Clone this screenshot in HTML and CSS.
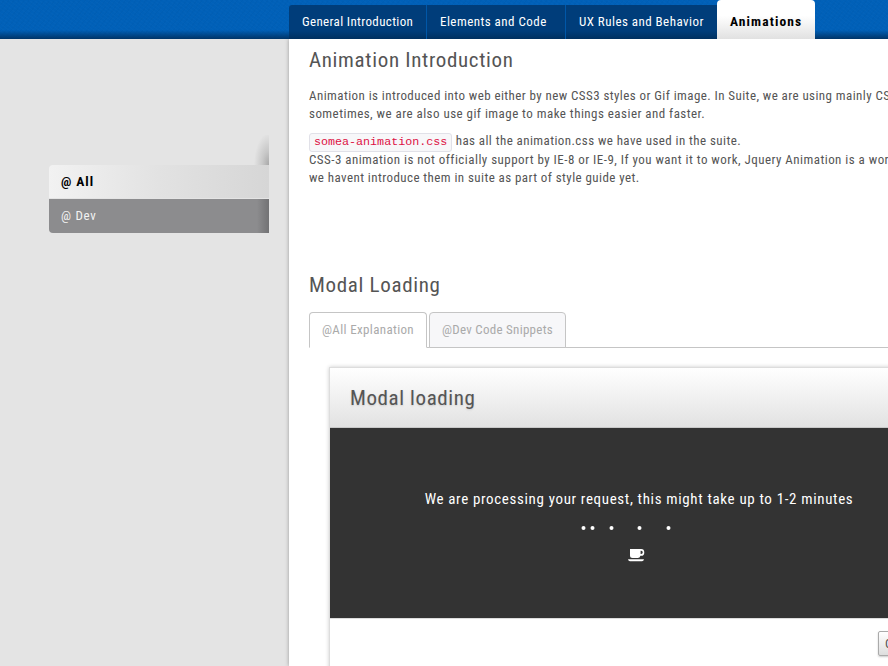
FILE: index.html
```html
<!DOCTYPE html>
<html lang="en">
<head>
<meta charset="utf-8">
<title>Style Guide - Animations</title>
<link rel="stylesheet" href="styles.css">
</head>
<body>
<header class="topbar">
  <nav class="mainnav">
    <a class="nav-item nav-first">General Introduction</a>
    <a class="nav-item nav-second">Elements and Code</a>
    <a class="nav-item nav-third">UX Rules and Behavior</a>
    <a class="nav-item nav-active">Animations</a>
  </nav>
</header>
<div class="layout">
  <aside class="sidebar">
    <div class="side-shade"></div>
    <ul class="side-list">
      <li class="side-item side-current">@ All</li>
      <li class="side-item side-dev">@ Dev</li>
    </ul>
  </aside>
  <main class="content">
    <h2 class="title">Animation Introduction</h2>
    <p class="intro"><span class="lead">Animation is introduced into web either by new CSS3 styles or Gif image. In Suite, we are using mainly CSS3,</span><br>sometimes, we are also use gif image to make things easier and faster.</p>
    <p class="details"><code>somea-animation.css</code> <span class="suite">has all the animation.css we have used in the suite.</span><br>CSS-3 animation is not officially support by IE-8 or IE-9, If you want it to work, Jquery Animation is a workaround, but<br><span class="closing">we havent introduce them in suite as part of style guide yet.</span></p>
    <h2 class="title section">Modal Loading</h2>
    <div class="tabs">
      <a class="tab tab-on">@All Explanation</a>
      <a class="tab">@Dev Code Snippets</a>
    </div>
    <section class="modal">
      <div class="modal-head"><h3>Modal loading</h3></div>
      <div class="modal-body">
        <p class="message">We are processing your request, this might take up to 1-2 minutes</p>
        <svg class="dots" viewBox="0 0 92 6" fill="#fff"><circle cx="3.500" cy="3" r="2"/><circle cx="12.500" cy="3" r="2"/><circle cx="31.500" cy="3" r="2"/><circle cx="59.500" cy="3" r="2"/><circle cx="88.500" cy="3" r="2"/></svg>
        <svg class="cup" viewBox="0 0 17 13"><path fill="#fff" fill-rule="evenodd" d="M2 0h11.200a3 3.300 0 0 1 0 6.800h-.8q-.5 2.200-2.600 2.200H4.500q-2.500 0-2.500-2.500zM12.600 1.700v3.300h.6a1.500 1.600 0 0 0 0-3.300zM0 10.300h16q-.4 2-2 2H2q-1.600 0-2-2z"/></svg>
      </div>
      <div class="modal-foot"><button class="btn">Cancel</button></div>
    </section>
  </main>
</div>
</body>
</html>
```
FILE: styles.css
```css
* { box-sizing: border-box; }
body { margin: 0; height: 666px; overflow: hidden; background: #e4e4e4; color: #555; font: 13px/18px "Roboto Condensed", Roboto, sans-serif; letter-spacing: .46px; }
.topbar { height: 39px; padding-left: 289px; background: linear-gradient(transparent 30px, #003467 39px), repeating-linear-gradient(37deg, #ffffff03 0 1px, transparent 1px 3px), repeating-linear-gradient(-52deg, #00000005 0 1px, transparent 1px 4px), #0060b8; }
.mainnav { display: flex; align-items: flex-end; height: 39px; }
.nav-item { height: 34px; line-height: 33px; padding-left: 13px; color: #fff; background: linear-gradient(#003d7a 26px, #00305f); white-space: nowrap; }
.nav-first { width: 138px; border-right: 1px solid #0057a8; border-radius: 3px 0 0; letter-spacing: .35px; }
.nav-second { width: 139px; border-right: 1px solid #0057a8; }
.nav-third { width: 151px; }
.nav-active { width: 98px; height: 39px; line-height: 43px; border-radius: 4px 4px 0 0; background: linear-gradient(#fff 40%, #e1e1e1); color: #000; font-size: 13.5px; font-weight: 700; letter-spacing: 1.1px; }
.layout { display: flex; height: 627px; }
.sidebar { width: 289px; padding: 96px 20px 0 49px; flex: none; }
.side-shade { height: 30px; background: radial-gradient(ellipse 15px 32px at 100% 100%, #a8a8a8, #c8c8c8 45%, #e4e4e4); }
.side-list { list-style: none; margin: 0; padding: 0; }
.side-item { height: 34px; padding-left: 12px; line-height: 33px; letter-spacing: .7px; }
.side-current { background: linear-gradient(90deg, #f2f2f2, #e2e2e2 50%, #d6d6d6); border-bottom: 1px solid #e4e4e4; color: #000; font-weight: 700; font-size: 13.5px; letter-spacing: .95px; border-radius: 4px 0 0; }
.side-dev { background: linear-gradient(90deg, transparent 208px, #727274), #8c8c8e; color: #f2f2f2; border-radius: 0 0 0 4px; }
.content { width: 720px; flex: none; padding: 8px 0 0 20px; background: #fff; box-shadow: 0 0 4px #999; clip-path: inset(0 0 0 -8px); white-space: nowrap; }
.title { margin: 0; font-weight: 400; font-size: 21px; line-height: 26px; letter-spacing: .67px; }
.intro { margin: 14px 0 9px; }
.details { margin: 0; }
.lead { letter-spacing: .42px; }
.suite { letter-spacing: .42px; }
.closing { letter-spacing: .42px; }
code { display: inline-block; height: 19px; margin-bottom: -1px; padding: 0 4px; border: 1px solid #e1e1e8; border-radius: 3px; background: #f7f7f9; color: #d14; font: 11.7px/17px "Liberation Mono", monospace; letter-spacing: 0; }
.section { margin-top: 85px; }
.tabs { display: flex; gap: 2px; height: 36px; margin-top: 14px; border-bottom: 1px solid #c5c5c5; }
.tab { width: 137px; height: 36px; padding-left: 12px; line-height: 34px; border: 1px solid #c5c5c5; border-radius: 4px 4px 0 0; background: #f7f7f9; color: #aaa; letter-spacing: .27px; }
.tab-on { width: 118px; background: #fff; border-bottom-color: #fff; letter-spacing: .35px; }
.modal { width: 614px; height: 340px; margin: 19px 0 0 20px; border: 1px solid #ddd; box-shadow: 0 0 4px #ccc; background: #fff; }
.modal-head { height: 60px; padding: 17px 20px; border-bottom: 1px solid #c8c8c8; background: linear-gradient(#fff, #e2e2e2); }
.modal-head h3 { margin: 0; font-size: 21px; line-height: 26px; font-weight: 400; letter-spacing: .6px; text-shadow: 0 1px 2px #ccc; }
.modal-body { height: 190px; padding-top: 61px; background: #333; color: #fff; display: flex; flex-direction: column; align-items: center; }
.message { margin: 0 0 0 6px; font-size: 15px; line-height: 20px; letter-spacing: .65px; }
.dots { width: 92px; height: 6px; margin: 16px 0 18px -20px; }
.cup { width: 17px; height: 13px; }
.modal-foot { padding: 12px 0 0 548px; border-top: 1px solid #ddd; }
.btn { display: block; height: 25px; padding: 0 6px; border: 1px solid #aaa; border-radius: 2px; background: linear-gradient(#fff, #dedede); box-shadow: 0 1px 2px #ccc; color: #555; font: 13px "Roboto Condensed", Roboto, sans-serif; }
```
